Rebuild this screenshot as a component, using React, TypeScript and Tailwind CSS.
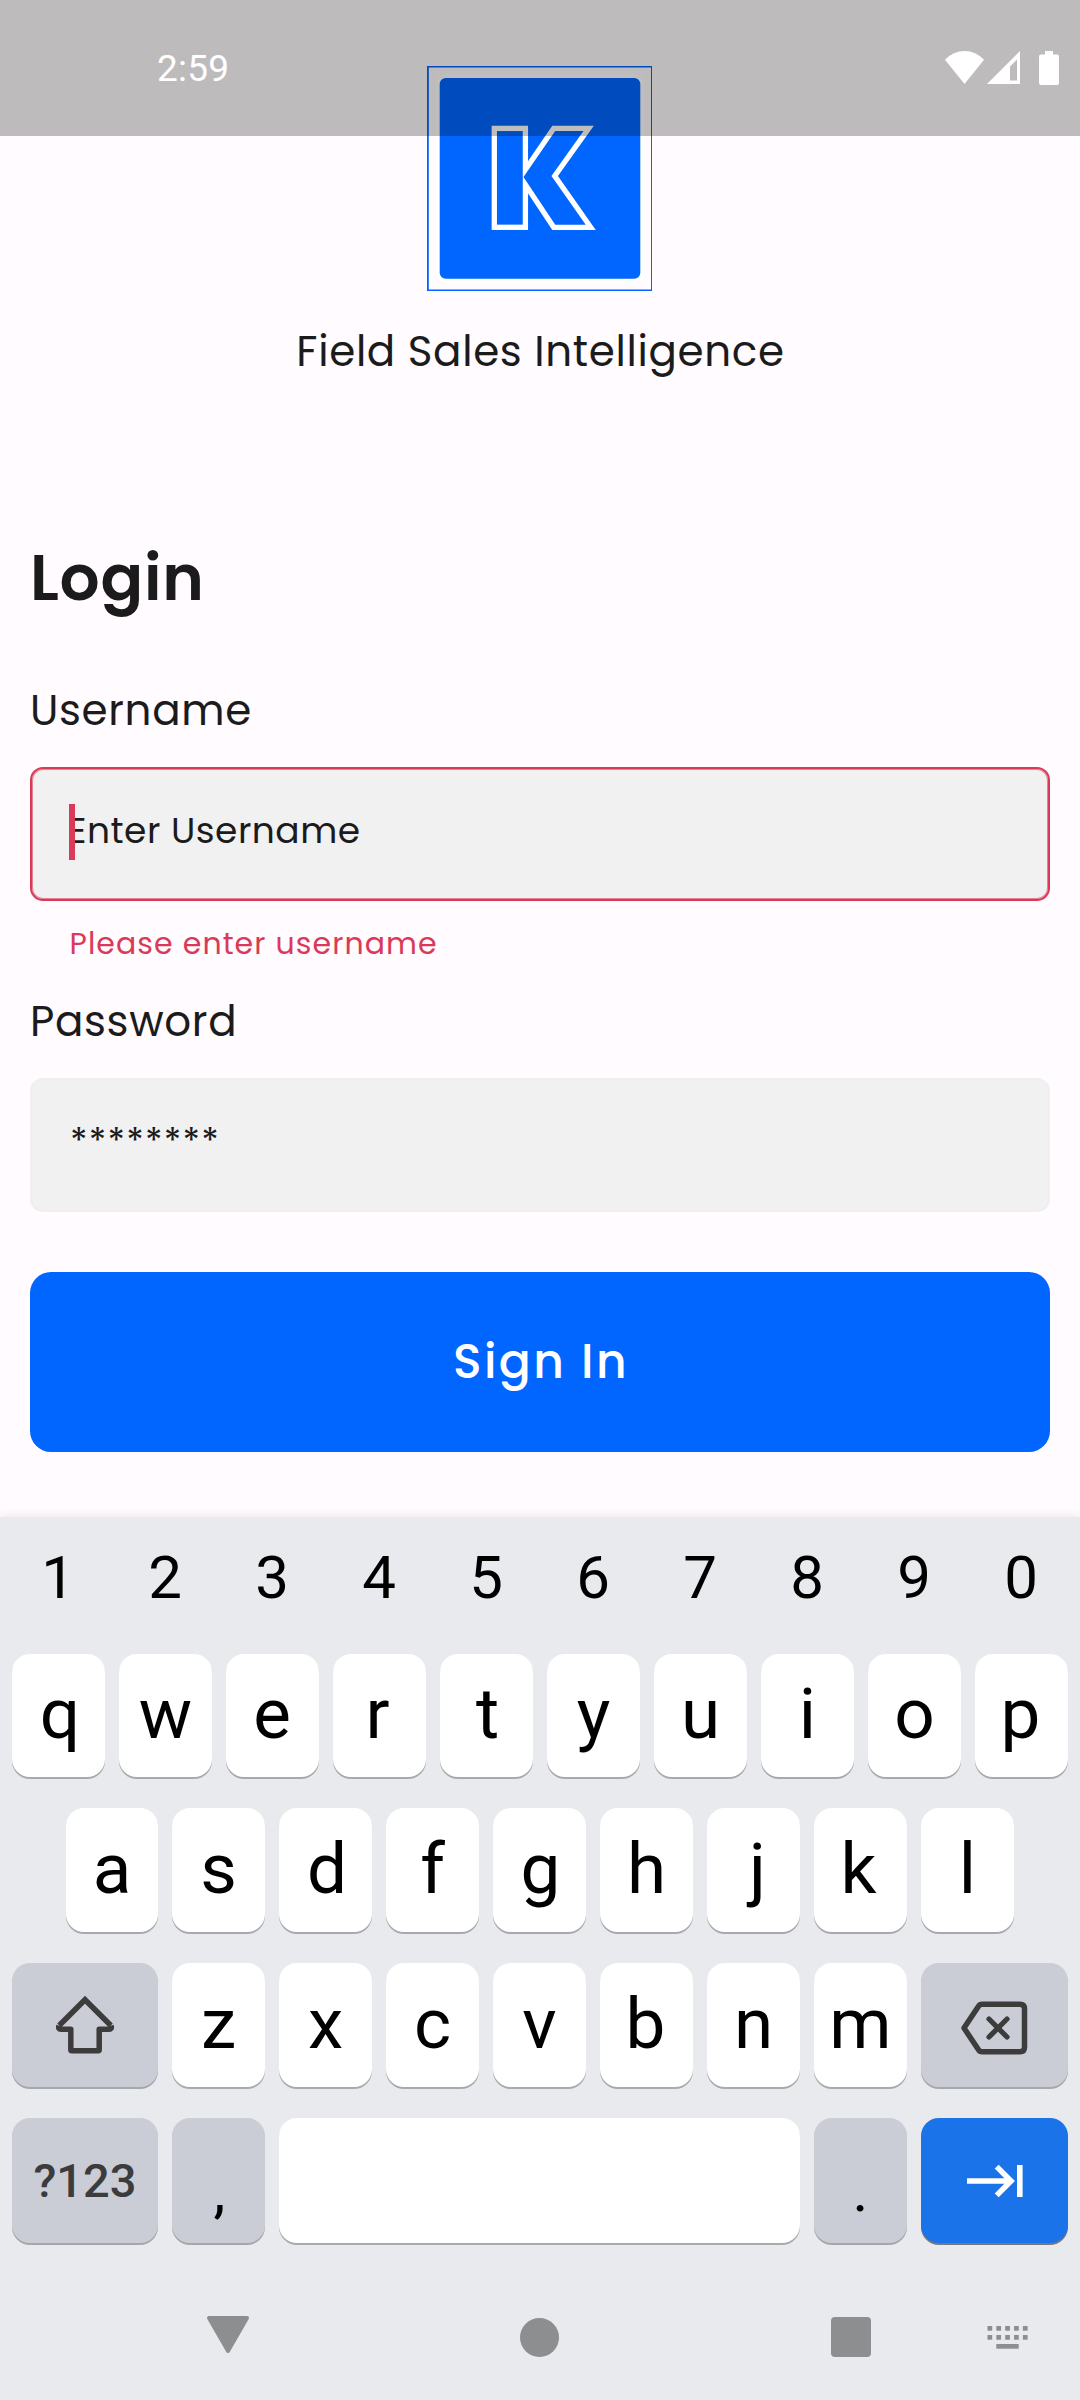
import type { ReactNode } from 'react';

function StatusBar() {
  return (
    <div className="absolute inset-x-0 top-0 z-10 flex h-[136px] items-start justify-between bg-black/[0.255] pr-[21px] pl-[157px] text-white">
      <span className="mt-[47px] font-['Roboto',sans-serif] text-[37px] leading-[44px] tracking-[0.2px]">2:59</span>
      <div className="mt-[51px] flex items-start">
        <svg width="39" height="33" viewBox="0 0 39 33" fill="currentColor">
          <path d="M19.5 33 0 8.7Q8.4 0 19.5 0T39 8.7Z" />
        </svg>
        <svg className="ml-[3px]" width="33" height="33" viewBox="0 0 33 33" fill="currentColor" fillRule="evenodd">
          <path d="M33 0V33H0ZM23 15.5V29.5H30V8.5Z" />
        </svg>
        <svg className="ml-[19px]" width="20" height="34" viewBox="0 0 20 34" fill="currentColor">
          <path d="M6 0H14V3.5H18Q20 3.5 20 5.5V32Q20 34 18 34H2Q0 34 0 32V5.5Q0 3.5 2 3.5H6Z" />
        </svg>
      </div>
    </div>
  );
}

function Logo() {
  return (
    <svg className="mt-[66px] mr-px self-center" width="225" height="225" viewBox="0 0 225 225">
      <defs>
        <clipPath id="arm">
          <rect x="96" y="50" width="90" height="125" />
        </clipPath>
      </defs>
      <path d="M0 0H225V225H0ZM1.8 1.4V223.5H224V1.4Z" fill="#0066ff" fillRule="evenodd" />
      <rect x="9" y="8" width="208" height="209" rx="9" fill="#ffffff" />
      <rect x="12.7" y="12" width="200.6" height="200.7" rx="6" fill="#0066ff" />
      <g fill="#0066ff" stroke="#ffffff" strokeWidth="5.3" strokeMiterlimit="10">
        <rect x="67.3" y="62.4" width="31.1" height="98.9" />
        <path clipPath="url(#arm)" d="M126.7 62.4H161.7L127.7 110 163.7 161.3H126.7L93.3 111Z" />
      </g>
    </svg>
  );
}

function Key({ children, className = '', tone = 'light' }: { children?: ReactNode; className?: string; tone?: 'light' | 'gray' | 'blue' }) {
  const tones = {
    light: 'bg-white text-black shadow-[0_2px_0_#a8a9ac]',
    gray: 'bg-[#cbcdd6] text-[#3c3c3c] shadow-[0_2px_0_#a6a7ab]',
    blue: 'bg-[#1a73e8] text-white shadow-[0_2px_0_#77787d]',
  };
  return (
    <div className={`flex items-center justify-center rounded-[18px] ${tones[tone]} ${className}`}>{children}</div>
  );
}

const OPTICAL: Record<string, string> = {
  q: 'pl-[3px]',
  d: 'pl-[3px]',
  g: 'pl-[2px]',
  t: 'pl-[2px]',
  j: 'pl-[8px]',
  r: 'pr-[4px]',
  k: 'pr-[4px]',
  p: 'pr-[2px]',
  b: 'pr-[2px]',
  e: 'pr-[1px]',
};

function Letter({ char }: { char: string }) {
  return (
    <Key className={`${char === 'a' ? 'w-[92px]' : 'w-[93px]'} pb-1 text-[71px] leading-none ${OPTICAL[char] ?? ''}`}>
      <span>{char}</span>
    </Key>
  );
}

function Keyboard() {
  return (
    <div className="flex h-[883px] flex-col bg-[#e8eaed] px-3 font-['Roboto',sans-serif] shadow-[0_-2px_8px_rgba(80,40,80,0.09)]">
      <div className="flex h-[121px] justify-between text-[60px] leading-[121px] text-black">
        {'1234567890'.split('').map((d) => (
          <span key={d} className="w-[93px] pr-px text-center">{d}</span>
        ))}
      </div>
      <div className="mt-4 flex h-[123px] justify-between">
        {'qwertyuiop'.split('').map((c) => <Letter key={c} char={c} />)}
      </div>
      <div className="mt-[31px] flex h-[124px] justify-between px-[54px]">
        {'asdfghjkl'.split('').map((c) => <Letter key={c} char={c} />)}
      </div>
      <div className="mt-[31px] flex h-[124px] justify-between">
        <Key tone="gray" className="w-[146px]">
          <svg width="60" height="60" viewBox="0 0 60 60" fill="none" stroke="currentColor" strokeWidth="5.5" strokeLinejoin="round">
            <path strokeLinejoin="miter" d="M4.2 30.5 30 4.7 55.8 30.5" />
            <path d="M4 30.7Q2.8 34.3 6 34.3H15.8V54.7Q15.8 55.7 16.8 55.7H43.2Q44.2 55.7 44.2 54.7V34.3H54Q57.2 34.3 56 30.7" />
          </svg>
        </Key>
        {'zxcvbnm'.split('').map((c) => <Letter key={c} char={c} />)}
        <Key tone="gray" className="w-[147px] pt-[5px] pr-[2px]">
          <svg width="68" height="56" viewBox="0 0 68 56" fill="none" stroke="currentColor" strokeLinejoin="round" strokeLinecap="round">
            <path strokeWidth="5.5" d="M22 4.200H60Q64.500 4.200 64.500 8.700V47.300Q64.500 51.800 60 51.800H22Q19.800 51.800 18.500 49.800L4 28 18.500 6.200Q19.800 4.200 22 4.200Z" />
            <path strokeWidth="5.2" d="M29 19 47 37M47 19 29 37" />
          </svg>
        </Key>
      </div>
      <div className="mt-[31px] flex h-[125px] justify-between">
        <Key tone="gray" className="w-[146px] text-[47px] leading-none font-medium">
          <span>?123</span>
        </Key>
        <Key tone="gray" className="w-[93px] pl-[2px]">
          <span className="mt-5 text-[60px] leading-none text-black">,</span>
        </Key>
        <Key className="w-[521px]" />
        <Key tone="gray" className="w-[93px]">
          <span className="mt-5 text-[60px] leading-none text-black">.</span>
        </Key>
        <Key tone="blue" className="w-[147px]">
          <svg width="56" height="34" viewBox="0 0 56 34" fill="none" stroke="currentColor" strokeWidth="5.6">
            <path d="M0 17H43M29.7 2.6 44 17 29.7 31.4M52.8 1V33" />
          </svg>
        </Key>
      </div>
      <div className="mt-[74px] flex items-center pl-[194px] text-[#8d8e90]">
        <svg className="-mt-1.5" width="44" height="39" viewBox="0 0 44 39" fill="currentColor" stroke="currentColor" strokeWidth="4" strokeLinejoin="round">
          <path d="M3 3H41L22 36Z" />
        </svg>
        <div className="ml-[270px] size-[39px] rounded-full bg-[#8d8e90]" />
        <div className="ml-[272px] size-[40px] rounded-[4px] bg-[#8d8e90]" />
        <svg className="ml-[116px]" width="41" height="23" viewBox="0 0 41 23" fill="currentColor">
          {[0, 1, 2, 3, 4].map((i) => (
            <g key={i}>
              <rect x={0.5 + i * 8.85} y="0" width="4.7" height="4.7" />
              <rect x={0.5 + i * 8.85} y="9" width="4.7" height="4.7" />
            </g>
          ))}
          <rect x="9.3" y="18" width="22.4" height="4.7" />
        </svg>
      </div>
    </div>
  );
}

export default function App() {
  return (
    <div className="relative flex h-[2400px] w-[1080px] flex-col overflow-hidden bg-[#fffbfe]">
      <StatusBar />
      <main className="flex flex-col px-[30px] font-['Poppins','Inter',sans-serif] text-[#1c1b1c]">
        <Logo />
        <p className="mt-9 pl-px text-center text-[42px] leading-[50px] tracking-[0.66px] whitespace-nowrap">Field Sales Intelligence</p>
        <h1 className="mt-[163px] text-[63px] leading-[76px] font-semibold tracking-[0.7px]">Login</h1>
        <label className="mt-[70px] text-[42px] leading-[50px] tracking-[0.66px]">Username</label>
        <div className="relative mt-[31px] flex h-[134px] items-center rounded-[13px] border-2 border-[#da3a57] bg-[#f1f1f1] pb-1.5 pl-9 shadow-[inset_0_0_0_1px_rgba(218,58,87,0.6)]">
          <span className="text-[36px] leading-[44px] tracking-[0.5px]">Enter Username</span>
          <span className="absolute top-[35px] left-[37px] h-[56px] w-[5.500px] bg-[#da3a57]" />
        </div>
        <p className="mt-[23px] ml-[39.500px] text-[30px] leading-10 tracking-[1.05px] text-[#da3a57]">Please enter username</p>
        <label className="mt-[33px] text-[42px] leading-[50px] tracking-[0.66px]">Password</label>
        <div className="mt-[31px] flex h-[134px] items-center rounded-[13px] border-2 border-[#efefef] bg-[#f1f1f1] pb-1.5 pl-[38px]">
          <span className="text-[36px] leading-[44px] tracking-[1.26px]">********</span>
        </div>
        <button className="mt-[60px] flex h-[180px] items-center justify-center rounded-[21px] bg-[#0066ff] pt-px pl-[2px] text-[47.25px] font-medium tracking-[2.4px] text-white">
          Sign In
        </button>
      </main>
      <div className="mt-[65px]">
        <Keyboard />
      </div>
    </div>
  );
}
